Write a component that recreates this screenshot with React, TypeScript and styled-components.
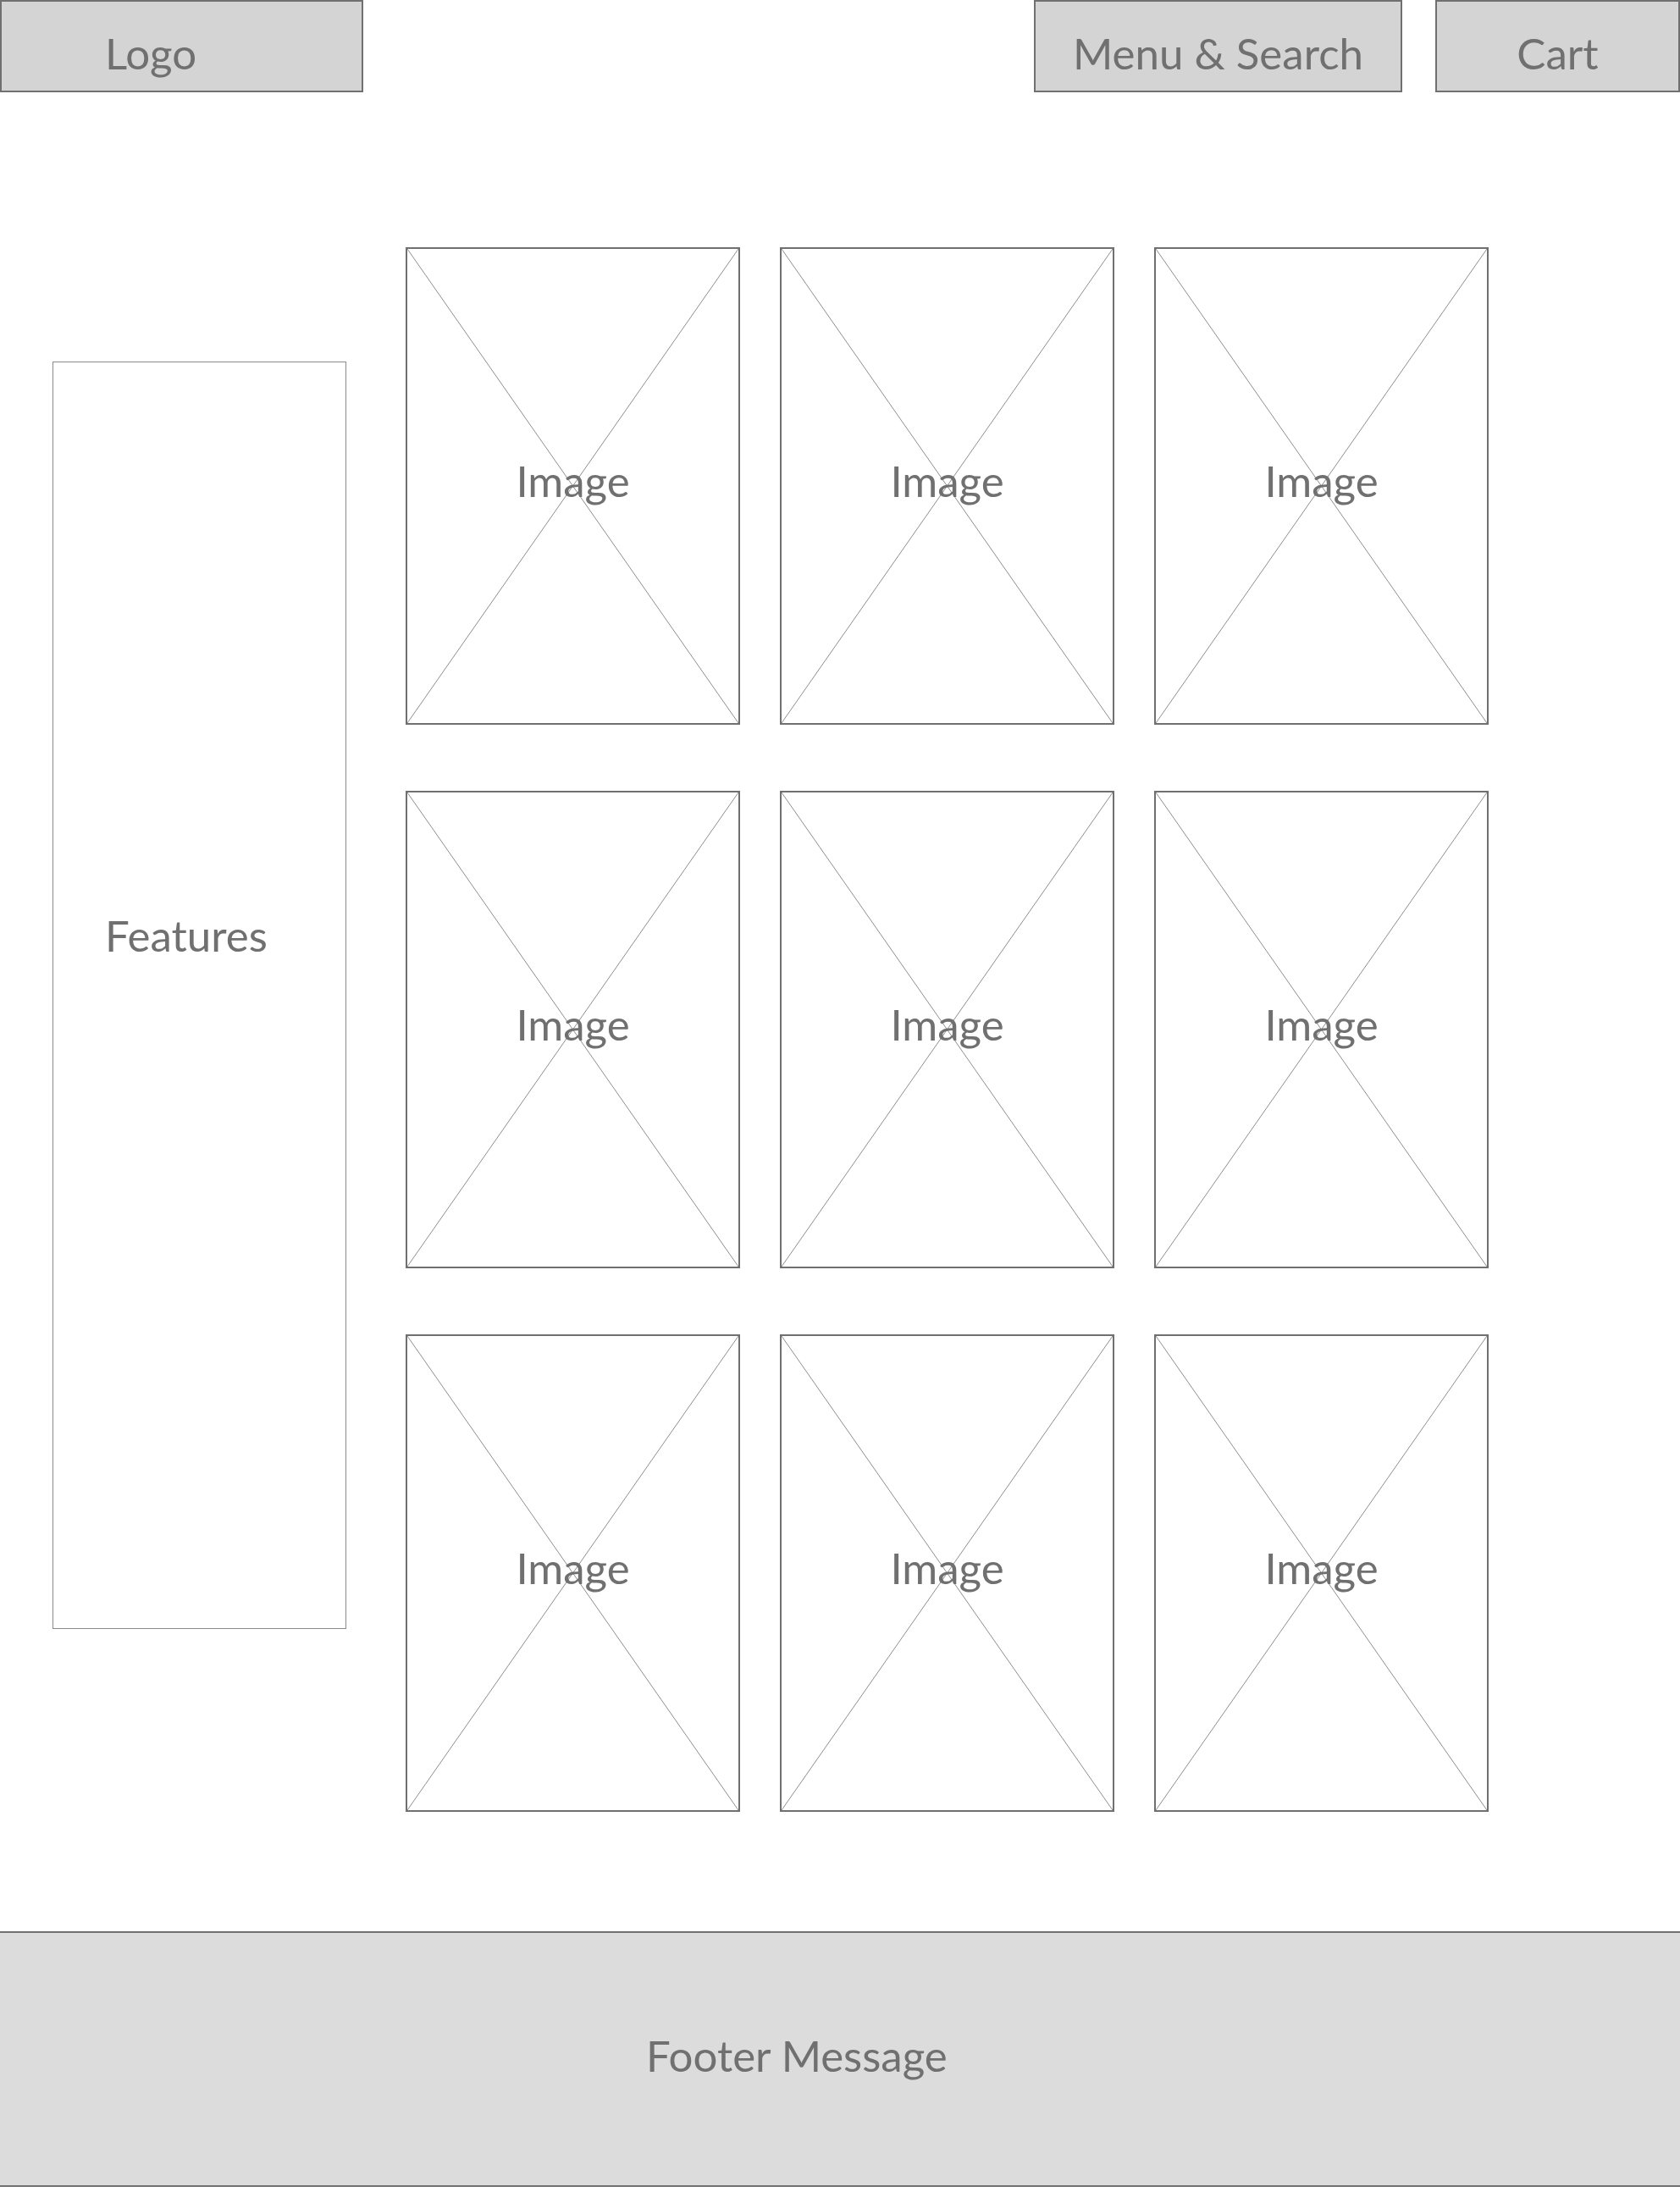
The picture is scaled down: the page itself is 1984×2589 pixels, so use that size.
import styled, { createGlobalStyle } from "styled-components";

const GlobalStyle = createGlobalStyle`
   html, body {
      margin: 0;
      padding: 0;
      background: #ffffff;
   }
   body {
      font-family: Lato, "Open Sans", "Liberation Sans", sans-serif;
      color: #707070;
   }
`;

const Page = styled.div`
   width: 1984px;
   height: 2589px;
   display: flex;
   flex-direction: column;
`;

const Header = styled.header`
   display: flex;
   align-items: flex-start;
   gap: 39px;
   height: 109px;
`;

const HeaderBox = styled.div<{ $width: number; $align?: "start" | "center"; $pad?: number }>`
   box-sizing: border-box;
   width: ${({ $width }) => $width}px;
   height: 109px;
   background: #d4d4d4;
   border: 2px solid #707070;
   display: flex;
   align-items: center;
   justify-content: ${({ $align }) => ($align === "start" ? "flex-start" : "center")};
   padding-left: ${({ $pad }) => $pad ?? 0}px;
   padding-top: 15px;
   font-size: 51px;
   color: #707070;
`;

const Spacer = styled.div`
   flex: 1;
`;

const Main = styled.main`
   display: flex;
   align-items: flex-start;
   margin-top: 183px;
   padding-left: 62px;
   gap: 70px;
`;

const Features = styled.aside`
   box-sizing: border-box;
   width: 347px;
   height: 1497px;
   margin-top: 135px;
   border: 1px solid #8a8a8a;
   padding: 646px 0 0 61px;
   font-size: 51px;
   color: #707070;
`;

const Grid = styled.div`
   display: grid;
   grid-template-columns: repeat(3, 395px);
   grid-auto-rows: 564px;
   column-gap: 47px;
   row-gap: 78px;
`;

const ImageCard = styled.div`
   position: relative;
   box-sizing: border-box;
   border: 2px solid #707070;
   display: flex;
   align-items: center;
   justify-content: center;
   background: #ffffff;
`;

const Cross = styled.svg`
   position: absolute;
   inset: 0;
   width: 100%;
   height: 100%;
`;

const ImageLabel = styled.span`
   position: relative;
   font-size: 51px;
   color: #707070;
   margin-bottom: 13px;
`;

const Footer = styled.footer`
   box-sizing: border-box;
   margin-top: 141px;
   height: 302px;
   background: #dcdcdc;
   border-top: 2px solid #707070;
   border-bottom: 2px solid #707070;
   display: flex;
   align-items: center;
   padding-left: 763px;
   padding-bottom: 9px;
   font-size: 51px;
   color: #707070;
`;

function Placeholder() {
   return (
      <ImageCard>
         <Cross viewBox="0 0 100 100" preserveAspectRatio="none">
            <line x1="0" y1="0" x2="100" y2="100" stroke="#8e8e8e" strokeWidth="1" vectorEffect="non-scaling-stroke" />
            <line x1="100" y1="0" x2="0" y2="100" stroke="#8e8e8e" strokeWidth="1" vectorEffect="non-scaling-stroke" />
         </Cross>
         <ImageLabel>Image</ImageLabel>
      </ImageCard>
   );
}

export default function App() {
   const cells = Array.from({ length: 9 }, (_, i) => i);

   return (
      <>
         <GlobalStyle />
         <Page>
            <Header>
               <HeaderBox $width={429} $align="start" $pad={122}>Logo</HeaderBox>
               <Spacer />
               <HeaderBox $width={435}>Menu &amp; Search</HeaderBox>
               <HeaderBox $width={289}>Cart</HeaderBox>
            </Header>

            <Main>
               <Features>Features</Features>
               <Grid>
                  {cells.map(i => <Placeholder key={i} />)}
               </Grid>
            </Main>

            <Footer>Footer Message</Footer>
         </Page>
      </>
   );
}
